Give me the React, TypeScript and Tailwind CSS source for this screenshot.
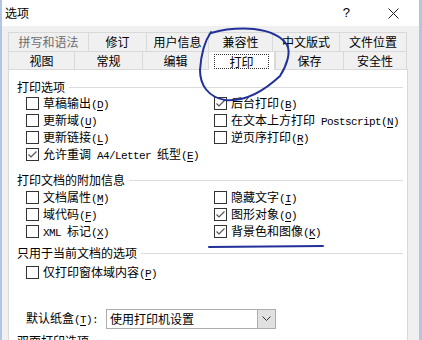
import React from "react";

const UI = "font-['Noto_Sans_CJK_SC',sans-serif]";

const backTabs: [string, number][] = [
  ["拼写和语法", 80],
  ["修订", 58],
  ["用户信息", 62],
  ["兼容性", 64],
  ["中文版式", 67],
  ["文件位置", 68],
];

const frontTabs: [string, number][] = [
  ["视图", 66],
  ["常规", 68],
  ["编辑", 66],
  ["打印", 67],
  ["保存", 68],
  ["安全性", 64],
];

// splits CJK and ascii runs, ascii rendered half width like SimSun
function Runs({ text }: { text: string }) {
  const parts = text.match(/[\x20-\x7e]+|[^\x20-\x7e]+/g) || [];
  return (
    <>
      {parts.map((p, i) =>
        /^[\x20-\x7e]+$/.test(p) ? (
          <span
            key={i}
            className="font-['Liberation_Mono',monospace] text-[11px] tracking-[-0.6px] whitespace-pre"
          >
            {p}
          </span>
        ) : (
          <span key={i}>{p}</span>
        )
      )}
    </>
  );
}

function Label({ text }: { text: string }) {
  const m = text.match(/^(.*)\((.)\)(:?)$/);
  if (!m) return <Runs text={text} />;
  return (
    <span className="whitespace-nowrap">
      <Runs text={m[1]} />
      <span className="font-['Liberation_Mono',monospace] text-[11px] tracking-[-0.6px]">
        (<span className="underline underline-offset-2">{m[2]}</span>){m[3]}
      </span>
    </span>
  );
}

function Check({ label, checked }: { label: string; checked?: boolean }) {
  return (
    <div className="h-[17px] flex items-center gap-[4px] text-[12px] leading-[17px] text-black">
      <span className="w-[13px] h-[13px] border border-[#333] bg-white flex items-center justify-center shrink-0">
        {checked && (
          <svg width="11" height="11" viewBox="0 0 11 11">
            <path d="M1.5 5.5 L4 8 L9.5 2.5" fill="none" stroke="#555" strokeWidth="1.2" />
          </svg>
        )}
      </span>
      <Label text={label} />
    </div>
  );
}

function Group({ title, className = "" }: { title: string; className?: string }) {
  return (
    <div className={`h-[16px] flex items-center gap-[4px] pr-[4px] text-[12px] text-black ${className}`}>
      <span className="whitespace-nowrap">{title}</span>
      <div className="flex-1 h-px bg-[#dcdcdc]" />
    </div>
  );
}

export default function App() {
  return (
    <div
      className={`relative w-[422px] h-[340px] overflow-hidden bg-[#f0f0f0] border-l-2 border-r-[3px] border-[#b3c5e3] flex flex-col ${UI}`}
    >
      {/* title bar */}
      <div className="h-[26px] bg-white flex items-center shrink-0 text-[12px] text-black">
        <span className="pl-[3px]">选项</span>
        <span className="ml-auto mr-[38px] font-['Liberation_Sans',sans-serif] text-[13px]">?</span>
        <svg width="11" height="11" viewBox="0 0 11 11" className="mr-[20px]">
          <path d="M0.5 0.5 L10.5 10.5 M10.5 0.5 L0.5 10.5" stroke="#222" strokeWidth="1" />
        </svg>
      </div>

      <div className="flex-1 flex flex-col pl-[6px] pr-[11px] pt-[6px]">
        {/* back tab row */}
        <div className="flex h-[19px] text-[12px]">
          {backTabs.map(([t, w], i) => (
            <div
              key={t}
              style={{ width: w }}
              className={`border-t border-l border-[#d9d9d9] flex items-center justify-center ${
                i === backTabs.length - 1 ? "border-r" : ""
              } ${i === 0 ? "text-[#6d6d6d]" : "text-black"}`}
            >
              {t}
            </div>
          ))}
        </div>
        {/* front tab row */}
        <div className="flex h-[18px] text-[12px] text-black">
          {frontTabs.map(([t, w], i) => (
            <div
              key={t}
              style={{ width: w }}
              className={`border-t border-l border-[#d9d9d9] flex items-center justify-center ${
                i === frontTabs.length - 1 ? "border-r" : ""
              } ${t === "打印" ? "bg-white border-r relative z-10 h-[19px]" : ""}`}
            >
              {t === "打印" ? (
                <span className="border border-dotted border-[#333] px-[14px] h-[15px] leading-[13px] flex items-center">
                  {t}
                </span>
              ) : (
                t
              )}
            </div>
          ))}
        </div>

        {/* tab page */}
        <div className="flex-1 bg-white border border-[#d9d9d9] pl-[8px] pt-[9px]">
          <Group title="打印选项" />
          <div className="grid grid-cols-[188px_1fr] ml-[9px]">
            <Check label="草稿输出(D)" />
            <Check label="后台打印(B)" checked />
            <Check label="更新域(U)" />
            <Check label="在文本上方打印 Postscript(N)" />
            <Check label="更新链接(L)" />
            <Check label="逆页序打印(R)" />
            <Check label="允许重调 A4/Letter 纸型(E)" checked />
          </div>

          <Group title="打印文档的附加信息" className="mt-[9px]" />
          <div className="grid grid-cols-[188px_1fr] ml-[9px] mt-[1px]">
            <Check label="文档属性(M)" />
            <Check label="隐藏文字(I)" />
            <Check label="域代码(F)" />
            <Check label="图形对象(O)" checked />
            <Check label="XML 标记(X)" />
            <Check label="背景色和图像(K)" checked />
          </div>

          <Group title="只用于当前文档的选项" className="mt-[5px]" />
          <div className="ml-[9px] mt-[3px]">
            <Check label="仅打印窗体域内容(P)" />
          </div>

          <div className="ml-[9px] mt-[28px] flex items-center h-[20px] text-[12px] text-black">
            <span className="w-[80px]">
              <Label text="默认纸盒(T):" />
            </span>
            <div className="flex h-[20px]">
              <div className="w-[152px] border border-[#adadad] bg-white flex items-center pl-[3px]">
                使用打印机设置
              </div>
              <div className="w-[18px] border border-l-0 border-[#adadad] bg-[#e1e1e1] flex items-center justify-center">
                <svg width="9" height="6" viewBox="0 0 9 6">
                  <path d="M0.5 0.5 L4.5 4.5 L8.5 0.5" fill="none" stroke="#333" strokeWidth="1" />
                </svg>
              </div>
            </div>
          </div>

          <Group title="双面打印选项" className="mt-[4px]" />
        </div>
      </div>

      {/* hand-drawn marks */}
      <svg className="absolute left-[-2px] top-0 pointer-events-none" width="422" height="340">
        <path
          d="M211 32 C204 42 201 55 200 70 C200 85 208 97 225 100 C245 102 265 90 280 76 C287 65 291 52 287 45 C282 37 270 31 254 29 C240 28 225 29 211 33"
          fill="none"
          stroke="#22309a"
          strokeWidth="2"
          strokeLinecap="round"
        />
        <path d="M209 247 L323 246" stroke="#22309a" strokeWidth="2" strokeLinecap="round" />
      </svg>
    </div>
  );
}
